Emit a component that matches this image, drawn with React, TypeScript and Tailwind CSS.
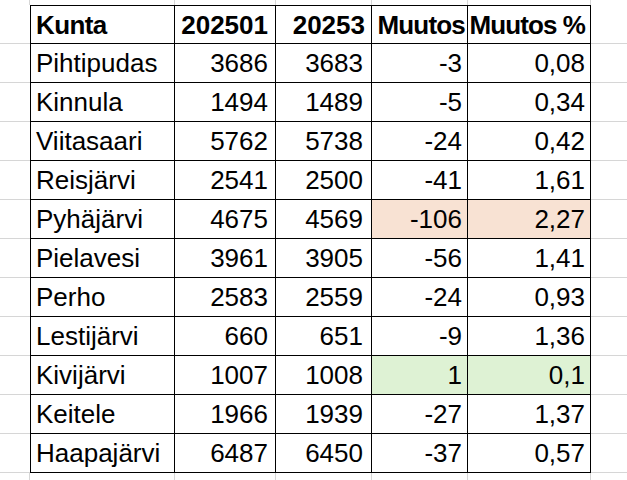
import React from 'react';

type Row = {
  kunta: string;
  a: string;
  b: string;
  muutos: string;
  pct: string;
  tone?: 'bad' | 'good';
};

const rows: Row[] = [
  { kunta: 'Pihtipudas', a: '3686', b: '3683', muutos: '-3', pct: '0,08' },
  { kunta: 'Kinnula', a: '1494', b: '1489', muutos: '-5', pct: '0,34' },
  { kunta: 'Viitasaari', a: '5762', b: '5738', muutos: '-24', pct: '0,42' },
  { kunta: 'Reisjärvi', a: '2541', b: '2500', muutos: '-41', pct: '1,61' },
  { kunta: 'Pyhäjärvi', a: '4675', b: '4569', muutos: '-106', pct: '2,27', tone: 'bad' },
  { kunta: 'Pielavesi', a: '3961', b: '3905', muutos: '-56', pct: '1,41' },
  { kunta: 'Perho', a: '2583', b: '2559', muutos: '-24', pct: '0,93' },
  { kunta: 'Lestijärvi', a: '660', b: '651', muutos: '-9', pct: '1,36' },
  { kunta: 'Kivijärvi', a: '1007', b: '1008', muutos: '1', pct: '0,1', tone: 'good' },
  { kunta: 'Keitele', a: '1966', b: '1939', muutos: '-27', pct: '1,37' },
  { kunta: 'Haapajärvi', a: '6487', b: '6450', muutos: '-37', pct: '0,57' },
];

// harmaat ruudukon viivat taulukon ulkopuolella
const gutter = 'border-[#d6d6d6]';
const cell = 'flex items-center border-black border-r border-b text-[26px] leading-none';

export default function App(): JSX.Element {
  const toneBg = (t?: string) =>
    t === 'bad' ? 'bg-[#f8e2d3]' : t === 'good' ? 'bg-[#def2d4]' : 'bg-white';

  return (
    <div
      className="w-[627px] h-[480px] overflow-hidden bg-white text-black grid grid-cols-[30px_145px_101px_96px_96px_123px_1fr] grid-rows-[5px_repeat(12,39px)_1fr]"
      style={{ fontFamily: '"Liberation Sans", Arial, sans-serif' }}
    >
      {/* yläreuna */}
      <div className={`border-r ${gutter}`} />
      <div className={`border-r ${gutter}`} />
      <div className={`border-r ${gutter}`} />
      <div className={`border-r ${gutter}`} />
      <div className={`border-r ${gutter}`} />
      <div className={`border-r ${gutter}`} />
      <div />

      {/* otsikkorivi */}
      <div className={`border-b ${gutter}`} />
      <div className={`${cell} border-l border-t font-bold pl-[5px] tracking-[-0.6px]`}>Kunta</div>
      <div className={`${cell} border-t font-bold justify-end pr-[7px]`}>202501</div>
      <div className={`${cell} border-t font-bold justify-end pr-[6px]`}>20253</div>
      <div className={`${cell} border-t font-bold justify-end pr-[2px] tracking-[-0.8px]`}>Muutos</div>
      <div className={`${cell} border-t font-bold justify-end pr-[5px] tracking-[-0.9px]`}>Muutos %</div>
      <div className={`border-b ${gutter}`} />

      {rows.map((r) => (
        <React.Fragment key={r.kunta}>
          <div className={`border-b ${gutter}`} />
          <div className={`${cell} border-l pl-[5px]`}>{r.kunta}</div>
          <div className={`${cell} justify-end pr-[7px]`}>{r.a}</div>
          <div className={`${cell} justify-end pr-[8px]`}>{r.b}</div>
          <div className={`${cell} justify-end pr-[5px] ${toneBg(r.tone)}`}>{r.muutos}</div>
          <div className={`${cell} justify-end pr-[5px] ${toneBg(r.tone)}`}>{r.pct}</div>
          <div className={`border-b ${gutter}`} />
        </React.Fragment>
      ))}

      {/* alareuna */}
      <div className={`border-r ${gutter}`} />
      <div className={`border-r ${gutter}`} />
      <div className={`border-r ${gutter}`} />
      <div className={`border-r ${gutter}`} />
      <div className={`border-r ${gutter}`} />
      <div className={`border-r ${gutter}`} />
      <div />
    </div>
  );
}
